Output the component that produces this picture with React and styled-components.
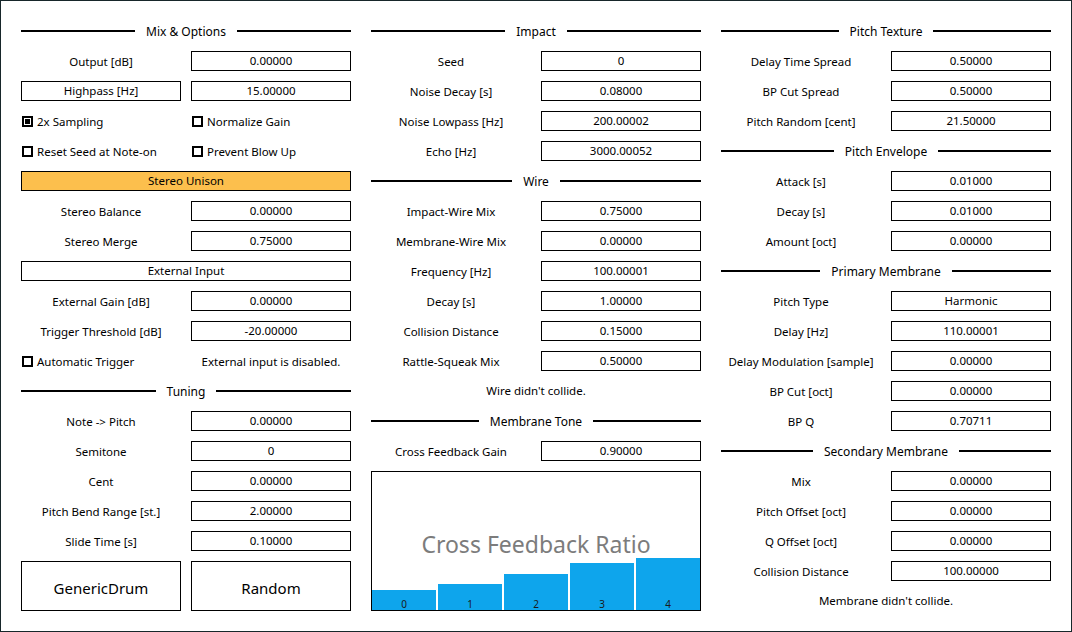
import React from "react";
import styled, { createGlobalStyle } from "styled-components";

const GlobalStyle = createGlobalStyle`
  html, body {
    margin: 0;
    padding: 0;
    background: #ffffff;
  }
  body {
    font-family: "Noto Sans", "DejaVu Sans", sans-serif;
    font-size: 11.5px;
    color: #000;
  }
`;

const mixRows = [
  { type: "header", text: "Mix & Options" },
  { type: "param", label: "Output [dB]", value: "0.00000" },
  { type: "param", label: "Highpass [Hz]", value: "15.00000", boxed: true },
  { type: "checks", items: [{ text: "2x Sampling", checked: true }, { text: "Normalize Gain" }] },
  { type: "checks", items: [{ text: "Reset Seed at Note-on" }, { text: "Prevent Blow Up" }] },
  { type: "wide", text: "Stereo Unison", accent: true },
  { type: "param", label: "Stereo Balance", value: "0.00000" },
  { type: "param", label: "Stereo Merge", value: "0.75000" },
  { type: "wide", text: "External Input" },
  { type: "param", label: "External Gain [dB]", value: "0.00000" },
  { type: "param", label: "Trigger Threshold [dB]", value: "-20.00000" },
  { type: "checkNote", check: "Automatic Trigger", note: "External input is disabled." },
  { type: "header", text: "Tuning" },
  { type: "param", label: "Note -> Pitch", value: "0.00000" },
  { type: "param", label: "Semitone", value: "0" },
  { type: "param", label: "Cent", value: "0.00000" },
  { type: "param", label: "Pitch Bend Range [st.]", value: "2.00000" },
  { type: "param", label: "Slide Time [s]", value: "0.10000" },
];

const impactRows = [
  { type: "header", text: "Impact" },
  { type: "param", label: "Seed", value: "0" },
  { type: "param", label: "Noise Decay [s]", value: "0.08000" },
  { type: "param", label: "Noise Lowpass [Hz]", value: "200.00002" },
  { type: "param", label: "Echo [Hz]", value: "3000.00052" },
  { type: "header", text: "Wire" },
  { type: "param", label: "Impact-Wire Mix", value: "0.75000" },
  { type: "param", label: "Membrane-Wire Mix", value: "0.00000" },
  { type: "param", label: "Frequency [Hz]", value: "100.00001" },
  { type: "param", label: "Decay [s]", value: "1.00000" },
  { type: "param", label: "Collision Distance", value: "0.15000" },
  { type: "param", label: "Rattle-Squeak Mix", value: "0.50000" },
  { type: "note", text: "Wire didn't collide." },
  { type: "header", text: "Membrane Tone" },
  { type: "param", label: "Cross Feedback Gain", value: "0.90000" },
];

const pitchRows = [
  { type: "header", text: "Pitch Texture" },
  { type: "param", label: "Delay Time Spread", value: "0.50000" },
  { type: "param", label: "BP Cut Spread", value: "0.50000" },
  { type: "param", label: "Pitch Random [cent]", value: "21.50000" },
  { type: "header", text: "Pitch Envelope" },
  { type: "param", label: "Attack [s]", value: "0.01000" },
  { type: "param", label: "Decay [s]", value: "0.01000" },
  { type: "param", label: "Amount [oct]", value: "0.00000" },
  { type: "header", text: "Primary Membrane" },
  { type: "param", label: "Pitch Type", value: "Harmonic" },
  { type: "param", label: "Delay [Hz]", value: "110.00001" },
  { type: "param", label: "Delay Modulation [sample]", value: "0.00000" },
  { type: "param", label: "BP Cut [oct]", value: "0.00000" },
  { type: "param", label: "BP Q", value: "0.70711" },
  { type: "header", text: "Secondary Membrane" },
  { type: "param", label: "Mix", value: "0.00000" },
  { type: "param", label: "Pitch Offset [oct]", value: "0.00000" },
  { type: "param", label: "Q Offset [oct]", value: "0.00000" },
  { type: "param", label: "Collision Distance", value: "100.00000" },
  { type: "note", text: "Membrane didn't collide." },
];

const feedbackRatio = [0.145, 0.19, 0.262, 0.34, 0.378];

const CheckItem = ({ text, checked }) => (
  <CheckLabel>
    <CheckBox $checked={checked} />
    <span>{text}</span>
  </CheckLabel>
);

const renderRow = (row, i) => {
  switch (row.type) {
    case "header":
      return (
        <SectionHeader key={i}>
          <Rule />
          <span>{row.text}</span>
          <Rule />
        </SectionHeader>
      );
    case "param":
      return (
        <Row key={i}>
          {row.boxed ? <Field>{row.label}</Field> : <Label>{row.label}</Label>}
          <Field>{row.value}</Field>
        </Row>
      );
    case "checks":
      return (
        <Row key={i}>
          {row.items.map((item) => (
            <CheckItem key={item.text} {...item} />
          ))}
        </Row>
      );
    case "checkNote":
      return (
        <Row key={i}>
          <CheckItem text={row.check} />
          <Label>{row.note}</Label>
        </Row>
      );
    case "wide":
      return (
        <WideRow key={i}>
          <WideField $accent={row.accent}>{row.text}</WideField>
        </WideRow>
      );
    case "note":
      return <Note key={i}>{row.text}</Note>;
    default:
      return null;
  }
};

const App = () => {
  return (
    <>
      <GlobalStyle />
      <Window>
        <Column>
          {mixRows.map(renderRow)}
          <ButtonRow>
            <BigButton>GenericDrum</BigButton>
            <BigButton>Random</BigButton>
          </ButtonRow>
        </Column>

        <Column>
          {impactRows.map(renderRow)}
          <ChartWrap>
            <Chart>
              <ChartTitle>Cross Feedback Ratio</ChartTitle>
              <Bars>
                {feedbackRatio.map((v, i) => (
                  <Bar key={i} style={{ height: `${v * 100}%` }}>
                    <BarIndex>{i}</BarIndex>
                  </Bar>
                ))}
              </Bars>
            </Chart>
          </ChartWrap>
        </Column>

        <Column>{pitchRows.map(renderRow)}</Column>
      </Window>
    </>
  );
};

export default App;

const Window = styled.div`
  box-sizing: border-box;
  width: 1072px;
  height: 632px;
  border: 1px solid #17262a;
  padding: 15px 20px;
  display: grid;
  grid-template-columns: repeat(3, 330px);
  column-gap: 20px;
  align-content: start;
`;

const Column = styled.div`
  display: flex;
  flex-direction: column;
`;

const SectionHeader = styled.div`
  height: 30px;
  display: flex;
  align-items: center;
  gap: 11px;
  font-size: 12px;

  span {
    white-space: nowrap;
    line-height: 14px;
    padding-top: 2px;
  }
`;

const Rule = styled.div`
  flex: 1;
  height: 2px;
  background: #000;
`;

const Row = styled.div`
  height: 30px;
  display: grid;
  grid-template-columns: 160px 160px;
  column-gap: 10px;
  align-items: center;
`;

const Label = styled.div`
  text-align: center;
  white-space: nowrap;
`;

const Field = styled.div`
  box-sizing: border-box;
  height: 20px;
  border: 1px solid #000;
  line-height: 18px;
  text-align: center;
  white-space: nowrap;
`;

const WideRow = styled.div`
  height: 30px;
  display: flex;
  align-items: center;
`;

const WideField = styled(Field)`
  flex: 1;
  background: ${(p) => (p.$accent ? "#fcbf4d" : "transparent")};
`;

const CheckLabel = styled.div`
  display: flex;
  align-items: center;
  gap: 4px;
  padding-left: 1px;
  white-space: nowrap;
`;

const CheckBox = styled.span`
  box-sizing: border-box;
  width: 11px;
  height: 11px;
  border: 2px solid #000;
  display: flex;
  align-items: center;
  justify-content: center;

  &::after {
    content: "";
    width: 5px;
    height: 5px;
    background: ${(p) => (p.$checked ? "#000" : "transparent")};
  }
`;

const Note = styled.div`
  height: 30px;
  line-height: 30px;
  text-align: center;
`;

const ButtonRow = styled.div`
  display: grid;
  grid-template-columns: 160px 160px;
  column-gap: 10px;
  padding: 5px 0;
`;

const BigButton = styled.div`
  box-sizing: border-box;
  height: 50px;
  border: 1px solid #000;
  display: flex;
  align-items: center;
  justify-content: center;
  padding-top: 3px;
  font-size: 15px;
`;

const ChartWrap = styled.div`
  padding: 5px 0;
`;

const Chart = styled.div`
  position: relative;
  box-sizing: border-box;
  height: 140px;
  border: 1px solid #000;
`;

const ChartTitle = styled.div`
  position: absolute;
  left: 0;
  right: 0;
  top: 58px;
  text-align: center;
  font-size: 23px;
  color: #7c7c7c;
  line-height: 28px;
`;

const Bars = styled.div`
  height: 100%;
  display: flex;
  align-items: flex-end;
  gap: 2px;
`;

const Bar = styled.div`
  flex: 1;
  background: #0ea5ec;
  display: flex;
  align-items: flex-end;
  justify-content: center;
`;

const BarIndex = styled.span`
  font-size: 10px;
  line-height: 12px;
  color: #1a1a1a;
`;
